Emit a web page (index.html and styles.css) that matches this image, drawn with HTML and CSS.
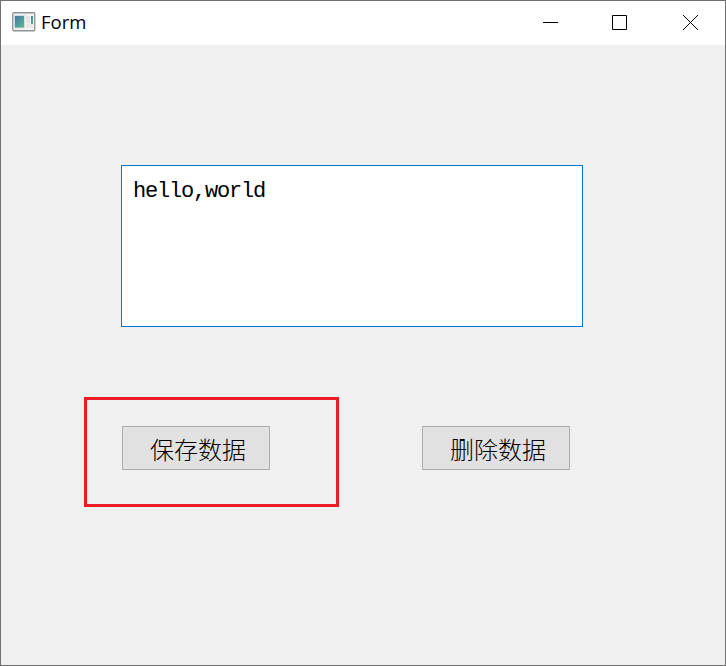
FILE: index.html
```html
<!DOCTYPE html>
<html lang="zh-CN">
<head>
<meta charset="utf-8">
<title>Form</title>
<link rel="stylesheet" href="styles.css">
</head>
<body>
<div class="window">
  <header class="titlebar">
    <svg class="app-icon" width="24" height="20" viewBox="0 0 24 20">
      <defs>
        <linearGradient id="pane" x1="0" y1="0" x2="1" y2="1">
          <stop offset="0" stop-color="#3f74ad"/>
          <stop offset="1" stop-color="#5fbf86"/>
        </linearGradient>
      </defs>
      <rect x="0.75" y="0.75" width="22" height="18" rx="1.2" fill="#f4f4f4" stroke="#8d9295" stroke-width="1.3"/>
      <rect x="2.5" y="3.5" width="10" height="12.5" fill="url(#pane)" stroke="#d5dde0"/>
      <rect x="14" y="4" width="4" height="7" fill="#e3e3e3"/>
      <rect x="14" y="12" width="7" height="4" fill="#e8e8e8"/>
      <rect x="19" y="4" width="2" height="8" fill="url(#pane)"/>
    </svg>
    <span class="title">Form</span>
    <div class="controls">
      <svg class="control" width="15" height="15" viewBox="0 0 15 15"><path d="M0 7.5h15"/></svg>
      <svg class="control" width="15" height="15" viewBox="0 0 15 15"><path d="M.5 .5h14v14H.5z"/></svg>
      <svg class="control" width="15" height="15" viewBox="0 0 15 15"><path d="M0 0l15 15M15 0L0 15"/></svg>
    </div>
  </header>
  <main class="form">
    <div class="editor">hello,world</div>
    <div class="actions">
      <button class="button">保存数据</button>
      <button class="button">删除数据</button>
      <div class="highlight"></div>
    </div>
  </main>
</div>
</body>
</html>
```
FILE: styles.css
```css
* { box-sizing: border-box; }

body { margin: 0; }

.window {
  display: flex;
  flex-direction: column;
  width: 726px;
  height: 666px;
  border: 1px solid #707070;
  background: #f0f0f0;
}

.titlebar {
  display: flex;
  align-items: center;
  flex: none;
  height: 44px;
  padding: 0 27px 0 11px;
  background: #fff;
}

.app-icon { margin-top: -2px; }

.title {
  margin: -3px 0 0 5px;
  font: 18.5px/24px "Open Sans", "Noto Sans", sans-serif;
  color: #000;
}

.controls {
  display: flex;
  gap: 55px;
  margin: -1px 0 0 auto;
}

.control {
  fill: none;
  stroke: #000;
  stroke-width: 1;
}

.control:nth-child(2) { margin-left: -1px; }
.control:nth-child(3) { margin-left: 1px; }

.form { padding: 120px 0 0 120px; }

.editor {
  width: 462px;
  height: 162px;
  padding: 12px 11px;
  border: 1px solid #0078d7;
  background: #fff;
  color: #000;
  font: 22px/28px "Liberation Mono", monospace;
  letter-spacing: -1.2px;
}

.actions {
  position: relative;
  display: flex;
  gap: 152px;
  margin: 99px 0 0 1px;
}

.button {
  width: 148px;
  height: 44px;
  padding: 2px 0 0 4px;
  border: 1px solid #adadad;
  border-radius: 0;
  background: #e1e1e1;
  color: #000;
  font: 300 24px/36px "Noto Sans CJK SC", sans-serif;
}

.highlight {
  position: absolute;
  top: -29px;
  left: -38px;
  width: 255px;
  height: 110px;
  border: 3px solid #ed1c24;
}
```
